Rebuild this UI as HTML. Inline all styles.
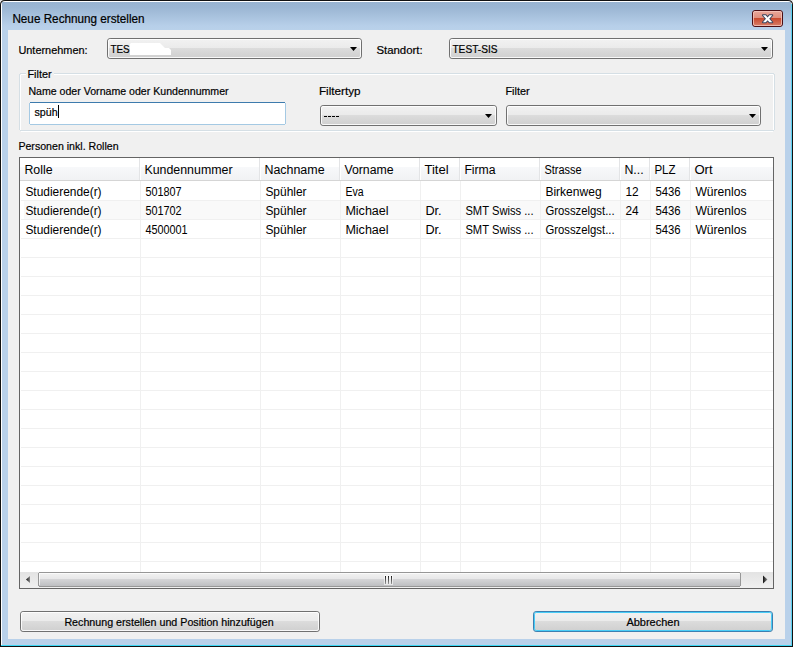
<!DOCTYPE html>
<html><head><meta charset="utf-8"><style>
html,body{margin:0;padding:0;background:#f0f0f0;overflow:hidden}
svg{display:block}
text{font-family:"Liberation Sans", sans-serif}
</style></head><body>
<svg width="793" height="647" viewBox="0 0 793 647">
<defs>
<linearGradient id="gtitle" x1="0" y1="0" x2="0" y2="1">
<stop offset="0" stop-color="#98B3D0"/><stop offset="0.2" stop-color="#9BB6D3"/><stop offset="0.85" stop-color="#B7CFE9"/><stop offset="1" stop-color="#B9D1EA"/>
</linearGradient>
<linearGradient id="gbtn" x1="0" y1="0" x2="0" y2="1">
<stop offset="0" stop-color="#F2F2F2"/><stop offset="0.45" stop-color="#EBEBEB"/>
<stop offset="0.4501" stop-color="#DDDDDD"/><stop offset="1" stop-color="#CFCFCF"/>
</linearGradient>
<linearGradient id="ghdr" x1="0" y1="0" x2="0" y2="1">
<stop offset="0" stop-color="#FFFFFF"/><stop offset="0.4" stop-color="#FFFFFF"/>
<stop offset="0.41" stop-color="#F7F8FA"/><stop offset="1" stop-color="#F1F2F4"/>
</linearGradient>
<linearGradient id="gthumb" x1="0" y1="0" x2="0" y2="1">
<stop offset="0" stop-color="#F3F3F3"/><stop offset="0.45" stop-color="#E8E8E9"/>
<stop offset="0.46" stop-color="#D6D6D8"/><stop offset="1" stop-color="#BCBDC0"/>
</linearGradient>
<linearGradient id="gtrack" x1="0" y1="0" x2="0" y2="1">
<stop offset="0" stop-color="#E3E3E3"/><stop offset="1" stop-color="#F0F0F0"/>
</linearGradient>
<linearGradient id="garrow" x1="0" y1="0" x2="1" y2="0">
<stop offset="0" stop-color="#111"/><stop offset="1" stop-color="#8A8A8A"/>
</linearGradient>
<linearGradient id="ggrip" x1="0" y1="0" x2="0" y2="1">
<stop offset="0" stop-color="#1A1A1A"/><stop offset="1" stop-color="#9A9A9A"/>
</linearGradient>
<linearGradient id="gclose" x1="0" y1="0" x2="0" y2="1">
<stop offset="0" stop-color="#E9A99D"/><stop offset="0.45" stop-color="#E0907F"/>
<stop offset="0.46" stop-color="#C8462A"/><stop offset="1" stop-color="#D9826C"/>
</linearGradient>
</defs>
<g shape-rendering="crispEdges">

<rect x="0" y="0" width="793" height="647" fill="#E8E8E8"/>
</g>
<path d="M0 5 Q0 0 5 0 H788 Q793 0 793 5 V647 H0 Z" fill="#111"/>
<path d="M1 5 Q1 1 5 1 H788 Q792 1 792 5 V646 H1 Z" fill="#FFFFFF"/>
<path d="M2 5 Q2 2 5 2 H788 Q791 2 791 5 V645 H2 Z" fill="#B9D1EA"/>
<g shape-rendering="crispEdges">
<rect x="2" y="2" width="789" height="28" fill="url(#gtitle)"/>
<rect x="791" y="4" width="1" height="642" fill="#5BD0F0"/>
<rect x="1" y="645" width="791" height="1" fill="#3CD8F5"/>
<rect x="792" y="6" width="1" height="641" fill="#111"/>
<rect x="0" y="646" width="793" height="1" fill="#111"/>
<rect x="8" y="30" width="777" height="609" fill="#F0F0F0"/>
</g>
<text x="12.40" y="23" font-size="12" textLength="132.20" lengthAdjust="spacingAndGlyphs" fill="#000" stroke="#000" stroke-width="0.2">Neue Rechnung erstellen</text>
<g>
<rect x="752.5" y="10.5" width="30" height="16" rx="2.5" fill="url(#gclose)" stroke="#4A0E14"/>
<rect x="753.5" y="11.5" width="28" height="14" rx="1.5" fill="none" stroke="#F4C7BD" stroke-opacity="0.8"/>
</g>
<path d="M762.9 15.2 H765.7 L767.6 17.4 L769.5 15.2 H772.3 L769.2 18.8 L772.3 22.3 H769.5 L767.6 20.2 L765.7 22.3 H762.9 L766.0 18.8 Z" fill="#FFFFFF" stroke="#3A4660" stroke-width="1.9" stroke-linejoin="round" paint-order="stroke"/>
<text x="18.40" y="54" font-size="11.5" textLength="69.20" lengthAdjust="spacingAndGlyphs" fill="#000" stroke="#000" stroke-width="0.2">Unternehmen:</text>
<g>
<rect x="107.5" y="38.5" width="254" height="20" rx="2.6" ry="2.6" fill="url(#gbtn)" stroke="#707070"/>
<rect x="108.5" y="39.5" width="252" height="18" rx="1.6" ry="1.6" fill="none" stroke="#ffffff" stroke-opacity="0.85"/>
<rect x="449.5" y="38.5" width="323" height="20" rx="2.6" ry="2.6" fill="url(#gbtn)" stroke="#707070"/>
<rect x="450.5" y="39.5" width="321" height="18" rx="1.6" ry="1.6" fill="none" stroke="#ffffff" stroke-opacity="0.85"/>
</g>
<text x="110.40" y="53" font-size="11.5" textLength="19.20" lengthAdjust="spacingAndGlyphs" fill="#000" stroke="#000" stroke-width="0.2">TES</text>
<path d="M130 44 L131 43 H160 L165 48 H169 L171 50 V55 H130 Z" fill="#FFFFFF"/>
<path d="M350 47 h7 l-3.5 4 z" fill="#000"/>
<text x="376.40" y="54" font-size="11.5" textLength="46.20" lengthAdjust="spacingAndGlyphs" fill="#000" stroke="#000" stroke-width="0.2">Standort:</text>
<text x="452.40" y="53" font-size="11.5" textLength="45.20" lengthAdjust="spacingAndGlyphs" fill="#000" stroke="#000" stroke-width="0.2">TEST-SIS</text>
<path d="M761 47 h7 l-3.5 4 z" fill="#000"/>
<g shape-rendering="crispEdges">
<rect x="20.5" y="74.5" width="753" height="57" rx="2" fill="none" stroke="#FFFFFF"/>
<rect x="19.5" y="73.5" width="755" height="57" rx="2" fill="none" stroke="#D5DFE5"/>
<rect x="26" y="70" width="28" height="8" fill="#F0F0F0"/>
</g>
<text x="27.40" y="78" font-size="11.5" textLength="24.20" lengthAdjust="spacingAndGlyphs" fill="#000" stroke="#000" stroke-width="0.2">Filter</text>
<text x="28.40" y="95" font-size="11.5" textLength="200.20" lengthAdjust="spacingAndGlyphs" fill="#000" stroke="#000" stroke-width="0.2">Name oder Vorname oder Kundennummer</text>
<g shape-rendering="crispEdges">
<rect x="29.5" y="102.5" width="256" height="22" rx="2" fill="#FFFFFF" stroke="#A4C9E3"/>
<rect x="30" y="102" width="255" height="1" fill="#3D7BAD"/>
</g>
<text x="34.40" y="116" font-size="11.5" textLength="23.20" lengthAdjust="spacingAndGlyphs" fill="#000" stroke="#000" stroke-width="0.2">spüh</text>
<rect x="58" y="105" width="1" height="13" fill="#000"/>
<text x="318.90" y="95" font-size="11.5" textLength="41.70" lengthAdjust="spacingAndGlyphs" fill="#000" stroke="#000" stroke-width="0.2">Filtertyp</text>
<text x="505.40" y="95" font-size="11.5" textLength="24.20" lengthAdjust="spacingAndGlyphs" fill="#000" stroke="#000" stroke-width="0.2">Filter</text>
<g>
<rect x="320.5" y="105.5" width="176" height="20" rx="2.6" ry="2.6" fill="url(#gbtn)" stroke="#707070"/>
<rect x="321.5" y="106.5" width="174" height="18" rx="1.6" ry="1.6" fill="none" stroke="#ffffff" stroke-opacity="0.85"/>
<rect x="506.5" y="105.5" width="254" height="20" rx="2.6" ry="2.6" fill="url(#gbtn)" stroke="#707070"/>
<rect x="507.5" y="106.5" width="252" height="18" rx="1.6" ry="1.6" fill="none" stroke="#ffffff" stroke-opacity="0.85"/>
</g>
<g shape-rendering="crispEdges">
<rect x="324" y="116" width="3" height="1" fill="#000"/>
<rect x="328" y="116" width="3" height="1" fill="#000"/>
<rect x="332" y="116" width="3" height="1" fill="#000"/>
<rect x="336" y="116" width="3" height="1" fill="#000"/>
</g>
<path d="M485 114 h7 l-3.5 4 z" fill="#000"/>
<path d="M749 114 h7 l-3.5 4 z" fill="#000"/>
<text x="18.40" y="150" font-size="11.5" textLength="100.20" lengthAdjust="spacingAndGlyphs" fill="#000" stroke="#000" stroke-width="0.2">Personen inkl. Rollen</text>
<g shape-rendering="crispEdges">
<rect x="19" y="157" width="755" height="432" fill="#646464"/>
<rect x="20" y="158" width="753" height="430" fill="#FFFFFF"/>
<rect x="20" y="158" width="753" height="22" fill="url(#ghdr)"/>
<rect x="20" y="180" width="753" height="1" fill="#D5D5D5"/>
<rect x="139" y="158" width="1" height="22" fill="#E3E4E6"/>
<rect x="140" y="158" width="1" height="22" fill="#FFFFFF"/>
<rect x="259" y="158" width="1" height="22" fill="#E3E4E6"/>
<rect x="260" y="158" width="1" height="22" fill="#FFFFFF"/>
<rect x="339" y="158" width="1" height="22" fill="#E3E4E6"/>
<rect x="340" y="158" width="1" height="22" fill="#FFFFFF"/>
<rect x="419" y="158" width="1" height="22" fill="#E3E4E6"/>
<rect x="420" y="158" width="1" height="22" fill="#FFFFFF"/>
<rect x="459" y="158" width="1" height="22" fill="#E3E4E6"/>
<rect x="460" y="158" width="1" height="22" fill="#FFFFFF"/>
<rect x="539" y="158" width="1" height="22" fill="#E3E4E6"/>
<rect x="540" y="158" width="1" height="22" fill="#FFFFFF"/>
<rect x="619" y="158" width="1" height="22" fill="#E3E4E6"/>
<rect x="620" y="158" width="1" height="22" fill="#FFFFFF"/>
<rect x="649" y="158" width="1" height="22" fill="#E3E4E6"/>
<rect x="650" y="158" width="1" height="22" fill="#FFFFFF"/>
<rect x="689" y="158" width="1" height="22" fill="#E3E4E6"/>
<rect x="690" y="158" width="1" height="22" fill="#FFFFFF"/>
<rect x="24" y="201" width="749" height="18" fill="#F9F9F9"/>
<rect x="21" y="200" width="752" height="1" fill="#F0F0F0"/>
<rect x="21" y="219" width="752" height="1" fill="#F0F0F0"/>
<rect x="21" y="238" width="752" height="1" fill="#F0F0F0"/>
<rect x="21" y="257" width="752" height="1" fill="#F0F0F0"/>
<rect x="21" y="276" width="752" height="1" fill="#F0F0F0"/>
<rect x="21" y="295" width="752" height="1" fill="#F0F0F0"/>
<rect x="21" y="314" width="752" height="1" fill="#F0F0F0"/>
<rect x="21" y="333" width="752" height="1" fill="#F0F0F0"/>
<rect x="21" y="352" width="752" height="1" fill="#F0F0F0"/>
<rect x="21" y="371" width="752" height="1" fill="#F0F0F0"/>
<rect x="21" y="390" width="752" height="1" fill="#F0F0F0"/>
<rect x="21" y="409" width="752" height="1" fill="#F0F0F0"/>
<rect x="21" y="428" width="752" height="1" fill="#F0F0F0"/>
<rect x="21" y="447" width="752" height="1" fill="#F0F0F0"/>
<rect x="21" y="466" width="752" height="1" fill="#F0F0F0"/>
<rect x="21" y="485" width="752" height="1" fill="#F0F0F0"/>
<rect x="21" y="504" width="752" height="1" fill="#F0F0F0"/>
<rect x="21" y="523" width="752" height="1" fill="#F0F0F0"/>
<rect x="21" y="542" width="752" height="1" fill="#F0F0F0"/>
<rect x="21" y="561" width="752" height="1" fill="#F0F0F0"/>
<rect x="140" y="181" width="1" height="391" fill="#F0F0F0"/>
<rect x="260" y="181" width="1" height="391" fill="#F0F0F0"/>
<rect x="340" y="181" width="1" height="391" fill="#F0F0F0"/>
<rect x="420" y="181" width="1" height="391" fill="#F0F0F0"/>
<rect x="460" y="181" width="1" height="391" fill="#F0F0F0"/>
<rect x="540" y="181" width="1" height="391" fill="#F0F0F0"/>
<rect x="620" y="181" width="1" height="391" fill="#F0F0F0"/>
<rect x="650" y="181" width="1" height="391" fill="#F0F0F0"/>
<rect x="690" y="181" width="1" height="391" fill="#F0F0F0"/>
</g>
<text x="24.40" y="174" font-size="12.5" textLength="28.20" lengthAdjust="spacingAndGlyphs" fill="#000">Rolle</text>
<text x="144.40" y="174" font-size="12.5" textLength="88.20" lengthAdjust="spacingAndGlyphs" fill="#000">Kundennummer</text>
<text x="264.40" y="174" font-size="12.5" textLength="60.20" lengthAdjust="spacingAndGlyphs" fill="#000">Nachname</text>
<text x="344.40" y="174" font-size="12.5" textLength="49.20" lengthAdjust="spacingAndGlyphs" fill="#000">Vorname</text>
<text x="424.40" y="174" font-size="12.5" textLength="24.20" lengthAdjust="spacingAndGlyphs" fill="#000">Titel</text>
<text x="464.40" y="174" font-size="12.5" textLength="31.20" lengthAdjust="spacingAndGlyphs" fill="#000">Firma</text>
<text x="544.40" y="174" font-size="12.5" textLength="37.20" lengthAdjust="spacingAndGlyphs" fill="#000">Strasse</text>
<text x="624.40" y="174" font-size="12.5" textLength="19.20" lengthAdjust="spacingAndGlyphs" fill="#000">N...</text>
<text x="654.40" y="174" font-size="12.5" textLength="21.20" lengthAdjust="spacingAndGlyphs" fill="#000">PLZ</text>
<text x="694.40" y="174" font-size="12.5" textLength="18.20" lengthAdjust="spacingAndGlyphs" fill="#000">Ort</text>
<text x="25.40" y="196" font-size="12.5" textLength="76.20" lengthAdjust="spacingAndGlyphs" fill="#000">Studierende(r)</text>
<text x="145.40" y="196" font-size="12.5" textLength="36.20" lengthAdjust="spacingAndGlyphs" fill="#000">501807</text>
<text x="265.40" y="196" font-size="12.5" textLength="41.20" lengthAdjust="spacingAndGlyphs" fill="#000">Spühler</text>
<text x="345.40" y="196" font-size="12.5" textLength="18.20" lengthAdjust="spacingAndGlyphs" fill="#000">Eva</text>
<text x="545.40" y="196" font-size="12.5" textLength="56.20" lengthAdjust="spacingAndGlyphs" fill="#000">Birkenweg</text>
<text x="625.40" y="196" font-size="12.5" textLength="13.20" lengthAdjust="spacingAndGlyphs" fill="#000">12</text>
<text x="655.40" y="196" font-size="12.5" textLength="25.20" lengthAdjust="spacingAndGlyphs" fill="#000">5436</text>
<text x="695.40" y="196" font-size="12.5" textLength="51.20" lengthAdjust="spacingAndGlyphs" fill="#000">Würenlos</text>
<text x="25.40" y="215" font-size="12.5" textLength="76.20" lengthAdjust="spacingAndGlyphs" fill="#000">Studierende(r)</text>
<text x="145.40" y="215" font-size="12.5" textLength="36.20" lengthAdjust="spacingAndGlyphs" fill="#000">501702</text>
<text x="265.40" y="215" font-size="12.5" textLength="41.20" lengthAdjust="spacingAndGlyphs" fill="#000">Spühler</text>
<text x="345.40" y="215" font-size="12.5" textLength="43.20" lengthAdjust="spacingAndGlyphs" fill="#000">Michael</text>
<text x="425.40" y="215" font-size="12.5" textLength="16.20" lengthAdjust="spacingAndGlyphs" fill="#000">Dr.</text>
<text x="465.40" y="215" font-size="12.5" textLength="68.20" lengthAdjust="spacingAndGlyphs" fill="#000">SMT Swiss ...</text>
<text x="545.40" y="215" font-size="12.5" textLength="69.20" lengthAdjust="spacingAndGlyphs" fill="#000">Grosszelgst...</text>
<text x="625.40" y="215" font-size="12.5" textLength="13.20" lengthAdjust="spacingAndGlyphs" fill="#000">24</text>
<text x="655.40" y="215" font-size="12.5" textLength="25.20" lengthAdjust="spacingAndGlyphs" fill="#000">5436</text>
<text x="695.40" y="215" font-size="12.5" textLength="51.20" lengthAdjust="spacingAndGlyphs" fill="#000">Würenlos</text>
<text x="25.40" y="234" font-size="12.5" textLength="76.20" lengthAdjust="spacingAndGlyphs" fill="#000">Studierende(r)</text>
<text x="145.40" y="234" font-size="12.5" textLength="42.20" lengthAdjust="spacingAndGlyphs" fill="#000">4500001</text>
<text x="265.40" y="234" font-size="12.5" textLength="41.20" lengthAdjust="spacingAndGlyphs" fill="#000">Spühler</text>
<text x="345.40" y="234" font-size="12.5" textLength="43.20" lengthAdjust="spacingAndGlyphs" fill="#000">Michael</text>
<text x="425.40" y="234" font-size="12.5" textLength="16.20" lengthAdjust="spacingAndGlyphs" fill="#000">Dr.</text>
<text x="465.40" y="234" font-size="12.5" textLength="68.20" lengthAdjust="spacingAndGlyphs" fill="#000">SMT Swiss ...</text>
<text x="545.40" y="234" font-size="12.5" textLength="69.20" lengthAdjust="spacingAndGlyphs" fill="#000">Grosszelgst...</text>
<text x="655.40" y="234" font-size="12.5" textLength="25.20" lengthAdjust="spacingAndGlyphs" fill="#000">5436</text>
<text x="695.40" y="234" font-size="12.5" textLength="51.20" lengthAdjust="spacingAndGlyphs" fill="#000">Würenlos</text>
<g shape-rendering="crispEdges">
<rect x="20" y="572" width="753" height="16" fill="url(#gtrack)"/>
<rect x="38.5" y="572.5" width="702" height="14" rx="2" fill="url(#gthumb)" stroke="#979797"/>
<path d="M39.5 585 V574.5 Q39.5 573.5 40.5 573.5 H739" fill="none" stroke="#FFFFFF" stroke-opacity="0.7"/>
<rect x="384" y="575" width="3" height="10" fill="#FFFFFF" fill-opacity="0.6"/>
<rect x="387" y="575" width="3" height="10" fill="#FFFFFF" fill-opacity="0.6"/>
<rect x="390" y="575" width="3" height="10" fill="#FFFFFF" fill-opacity="0.6"/>
<rect x="385" y="576" width="1" height="8" fill="url(#ggrip)"/>
<rect x="388" y="576" width="1" height="8" fill="url(#ggrip)"/>
<rect x="391" y="576" width="1" height="8" fill="url(#ggrip)"/>
</g>
<path d="M26 579.5 L30 576 V583 Z" fill="url(#garrow)"/>
<path d="M767.5 579.5 L763 575.5 V583.5 Z" fill="url(#garrow)"/>
<g>
<rect x="20.5" y="611.5" width="299" height="20" rx="2.6" ry="2.6" fill="url(#gbtn)" stroke="#707070"/>
<rect x="21.5" y="612.5" width="297" height="18" rx="1.6" ry="1.6" fill="none" stroke="#ffffff" stroke-opacity="0.85"/>
<rect x="533.5" y="611.5" width="239" height="20" rx="2.6" ry="2.6" fill="url(#gbtn)" stroke="#3C7FB1"/>
<rect x="534.5" y="612.5" width="237" height="18" rx="1.6" ry="1.6" fill="none" stroke="#48CDF7"/>
</g>
<text x="64.40" y="626" font-size="11.5" textLength="209.20" lengthAdjust="spacingAndGlyphs" fill="#000" stroke="#000" stroke-width="0.2">Rechnung erstellen und Position hinzufügen</text>
<text x="626.40" y="626" font-size="11.5" textLength="53.20" lengthAdjust="spacingAndGlyphs" fill="#000" stroke="#000" stroke-width="0.2">Abbrechen</text>
</svg></body></html>
